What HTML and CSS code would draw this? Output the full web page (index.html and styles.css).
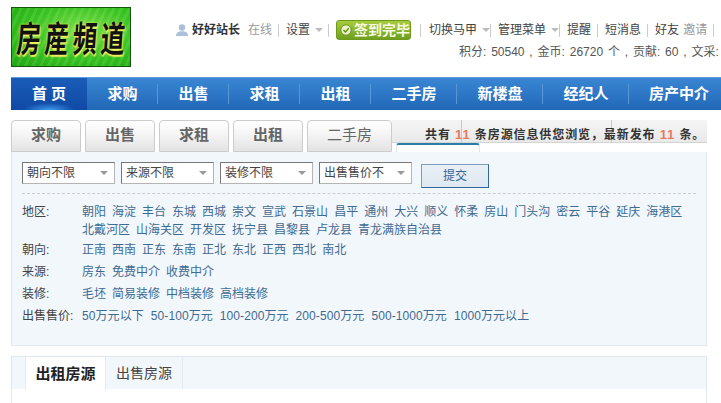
FILE: index.html
```html
<!DOCTYPE html>
<html lang="zh-CN">
<head>
  <meta charset="UTF-8" />
  <title>房产频道</title>
  <link rel="stylesheet" href="styles.css">
</head>
<body>
<header class="top">
  <div class="logo"><span class="logo-text">房産頻道</span></div>
  <div class="top-right">
    <div class="user-row">
      <svg class="user-icon" width="12" height="12" viewBox="0 0 12 12"><circle cx="6" cy="3.500" r="3.200" fill="#a9c0d8"/><path d="M0 12c0-3.500 2.500-4.800 6-4.800s6 1.300 6 4.800z" fill="#a9c0d8"/></svg>
      <b class="uname">好好站长</b>
      <span class="gray">在线</span>
      <i class="sep"></i>
      <span>设置</span><i class="caret"></i>
      <i class="sep after-caret"></i>
      <span class="sign">
        <svg width="14" height="14" viewBox="0 0 14 14"><circle cx="7" cy="7" r="6" fill="#e9f3c8" stroke="#5d8a12"/><path d="M4 7l2.300 2.300L10.200 5" fill="none" stroke="#5d8a12" stroke-width="1.600"/></svg>
        签到完毕
      </span>
      <i class="sep after-sign"></i>
      <span>切换马甲</span><i class="caret"></i><i class="sep tight"></i>
      <span>管理菜单</span><i class="caret"></i><i class="sep tight"></i>
      <span>提醒</span><i class="sep"></i>
      <span>短消息</span><i class="sep"></i>
      <span>好友</span>
      <span class="gray">邀请</span>
      <i class="sep"></i>
    </div>
    <div class="score-row">积分: 50540 , 金币: 26720 个 , 贡献: 60 , 文采:</div>
  </div>
</header>

<nav class="nav">
  <a class="nav-home">首 页</a>
  <a class="w71">求购</a>
  <a class="w71">出售</a>
  <a class="w71">求租</a>
  <a class="w71">出租</a>
  <a class="w86">二手房</a>
  <a class="w86">新楼盘</a>
  <a class="w86">经纪人</a>
  <a class="last">房产中介</a>
</nav>

<div class="tabs">
  <a class="tab">求购</a>
  <a class="tab">出售</a>
  <a class="tab">求租</a>
  <a class="tab">出租</a>
  <a class="tab wide">二手房</a>
  <div class="notice-wrap">
    <div class="notice">共有 <em>11</em> 条房源信息供您浏览，最新发布 <em>11</em> 条。</div>
    <div class="mini-tab"></div>
  </div>
</div>

<section class="panel">
  <div class="filters">
    <div class="sel">朝向不限<i class="caret"></i></div>
    <div class="sel">来源不限<i class="caret"></i></div>
    <div class="sel">装修不限<i class="caret"></i></div>
    <div class="sel">出售售价不<i class="caret"></i></div>
    <button class="submit">提交</button>
  </div>
  <div class="rows">
    <div class="row area">
      <label>地区:</label>
      <div class="links">
        <a>朝阳</a><a>海淀</a><a>丰台</a><a>东城</a><a>西城</a><a>崇文</a><a>宣武</a><a>石景山</a><a>昌平</a><a>通州</a><a>大兴</a><a>顺义</a><a>怀柔</a><a>房山</a><a>门头沟</a><a>密云</a><a>平谷</a><a>延庆</a><a>海港区</a>
        <a>北戴河区</a><a>山海关区</a><a>开发区</a><a>抚宁县</a><a>昌黎县</a><a>卢龙县</a><a>青龙满族自治县</a>
      </div>
    </div>
    <div class="row">
      <label>朝向:</label>
      <div class="links"><a>正南</a><a>西南</a><a>正东</a><a>东南</a><a>正北</a><a>东北</a><a>正西</a><a>西北</a><a>南北</a></div>
    </div>
    <div class="row">
      <label>来源:</label>
      <div class="links"><a>房东</a><a>免费中介</a><a>收费中介</a></div>
    </div>
    <div class="row">
      <label>装修:</label>
      <div class="links"><a>毛坯</a><a>简易装修</a><a>中档装修</a><a>高档装修</a></div>
    </div>
    <div class="row">
      <label>出售售价:</label>
      <div class="links prices"><a>50万元以下</a><a>50-100万元</a><a>100-200万元</a><a>200-500万元</a><a>500-1000万元</a><a>1000万元以上</a></div>
    </div>
  </div>
</section>

<section class="list">
  <div class="list-tabs">
    <a class="list-tab on">出租房源</a>
    <a class="list-tab">出售房源</a>
  </div>
</section>
</body>
</html>
```

FILE: styles.css
```css
html, body { margin: 0; height: 403px; overflow: hidden; background: #fff; }
body { width: 721px; font: 12px/18px "Liberation Sans", "Noto Sans CJK SC", sans-serif; color: #444; }
a { color: inherit; text-decoration: none; }
i { font-style: normal; }

.top { display: flex; height: 77px; padding: 7px 0 0 11px; box-sizing: border-box; }
.logo { flex: none; box-sizing: border-box; width: 120px; height: 60px; border: 1px solid #14560c; background: repeating-linear-gradient(115deg, rgba(255,255,255,.1) 0 3px, transparent 3px 7px), radial-gradient(ellipse at 60% 40%, #7fe04a, #35c21e 55%, #1fa510); display: flex; justify-content: center; align-items: center; overflow: hidden; }
.logo-text { display: block; white-space: nowrap; font: bold 24px/28px "Noto Sans CJK TC", serif; letter-spacing: 4px; margin-right: -4px; color: #111; text-shadow: 0 0 2px #f4f060, 1px 1px 1px #f4f060; transform: scaleY(1.5) skewX(-6deg); }
.top-right { width: 590px; padding-left: 44px; box-sizing: border-box; overflow: hidden; flex: none; }

.user-row { display: flex; align-items: center; height: 20px; margin-top: 13px; white-space: nowrap; color: #444; font-size: 12px; }
.user-icon { margin: 0 4px 0 1px; flex: none; }
.uname { color: #333; margin-right: 8px; }
.gray { color: #999; margin-left: 4px; }
.uname + .gray { margin-left: 0; }
.sep { width: 1px; height: 13px; background: #ccc; margin: 0 7px 0 6px; flex: none; }
.sep.tight { margin: 0 7px 0 0; }
.sep.after-caret { margin: 0 7px 0 5px; }
.sep.after-sign { margin: 0 8px 0 6px; }
.caret { width: 0; height: 0; border: 4px solid transparent; border-top-color: #bbb; border-bottom: 0; margin-left: 5px; flex: none; }
.sign { display: flex; align-items: center; gap: 2px; flex: none; box-sizing: border-box; width: 75px; height: 20px; margin: 0 3px 0 0; padding-left: 3px; border-radius: 3px; border: 1px solid #6d9a1c; background: linear-gradient(#a9cc3e, #6fa01e); color: #f7fbe6; font-weight: bold; font-size: 14px; }

.score-row { margin: 3px 0 0 284px; line-height: 18px; white-space: nowrap; color: #555; font-size: 12px; word-spacing: 1.5px; }

.nav { display: flex; height: 33px; margin-left: 11px; width: 710px; background: linear-gradient(#3a86d2, #2d77c6 50%, #2168b6); border-top: 1px solid #5b9bd9; box-sizing: border-box; color: #fff; font-weight: bold; font-size: 15px; overflow: hidden; }
.nav a { display: flex; align-items: center; justify-content: center; flex: none; box-sizing: border-box; height: 32px; }
.nav-home { width: 76px; background: radial-gradient(ellipse 26px 7px at 50% 100%, #3f9bee, transparent), linear-gradient(#1a5cb8, #0f4aa5); }
.w71, .w86 { background: linear-gradient(#5a96d2, #5a96d2) right center / 1px 20px no-repeat; }
.w71 { width: 71px; }
.w86 { width: 86px; }
.nav a.last { width: 100px; }

.tabs { display: flex; margin: 10px 14px 0 11px; height: 32px; position: relative; z-index: 1; }
.tab { box-sizing: border-box; width: 70px; height: 32px; margin-right: 4px; display: flex; align-items: center; justify-content: center; padding-bottom: 3px; border: 1px solid #ccc; border-radius: 4px 4px 0 0; background: linear-gradient(#fff, #f6f6f6 40%, #e3e3e3); color: #666; font-weight: bold; font-size: 15px; }
.tab.wide { width: 85px; margin-right: 0; font-weight: normal; }
.notice-wrap { flex: 1; }
.notice { box-sizing: border-box; height: 23px; padding: 5px 0 0 33px; border-bottom: 1px solid #d4d4d4; background: linear-gradient(#c9c9c9, #c9c9c9) 69px 0 / 1px 100% no-repeat, linear-gradient(#c9c9c9, #c9c9c9) 219px 0 / 1px 100% no-repeat, linear-gradient(#f5f5f5, #e9e9e9); color: #333; font-weight: bold; line-height: 20px; letter-spacing: 0.9px; white-space: nowrap; }
.notice em { font-style: normal; color: #e87a5c; font-size: 13px; }
.mini-tab { width: 84px; height: 9px; margin-left: 4px; box-sizing: border-box; border: 1px solid #dde6ef; border-top: 2px solid #2a7fa6; border-bottom: 0; border-radius: 3px 3px 0 0; background: #fff; }

.panel { box-sizing: border-box; margin: 0 14px 0 11px; height: 194px; padding: 10px 10px 0; background: #f2f7fc; border: 1px solid #dfe8f0; border-top: 0; }
.filters { display: flex; align-items: flex-start; height: 31px; border-bottom: 1px dashed #ccc; margin-bottom: 9px; }
.sel { box-sizing: border-box; width: 93px; height: 22px; margin-right: 6px; padding: 0 6px 0 4px; display: flex; align-items: center; justify-content: space-between; flex: none; background: #fff; border: 1px solid #b4b4b4; border-left-color: #777; border-top-color: #777; color: #444; white-space: nowrap; overflow: hidden; }
.sel .caret { margin-left: 0; border-top-color: #999; }
.submit { box-sizing: border-box; width: 68px; height: 24px; margin: 2px 0 0 3px; padding: 0; background: linear-gradient(#e9f0f6, #dfe8f1); border: 1px solid #7f9db9; border-right-color: #336699; border-bottom-color: #336699; color: #336699; font: inherit; }

.row { display: flex; margin-bottom: 4px; }
.row.area { margin-bottom: 2px; }
.row label { width: 60px; flex: none; color: #444; white-space: nowrap; }
.links { display: flex; flex-wrap: wrap; column-gap: 6px; width: 610px; color: #3f6a92; }
.links a { white-space: nowrap; }
.links.prices { column-gap: 7px; letter-spacing: 0.08px; }

.list { box-sizing: border-box; margin: 10px 14px 0 11px; height: 60px; border: 1px solid #dfe8f0; border-bottom: 0; background: #fff; }
.list-tabs { display: flex; height: 32px; padding-left: 13px; background: #f2f7fc; }
.list-tab { box-sizing: border-box; width: 77px; height: 32px; display: flex; align-items: center; justify-content: center; border-right: 1px solid #e2eaf2; color: #444; font-size: 14px; flex: none; }
.list-tab.on { width: 81px; height: 33px; background: #fff; border-left: 1px solid #e2eaf2; color: #222; font-weight: bold; font-size: 15px; }
```
